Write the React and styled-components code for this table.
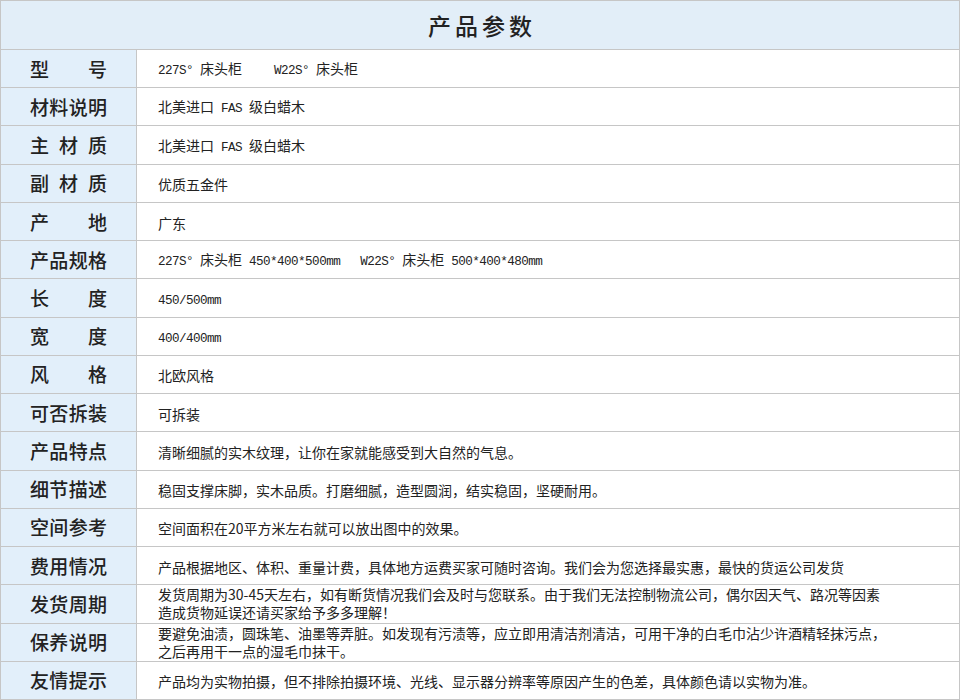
import React from "react";
import styled, { createGlobalStyle } from "styled-components";

const GlobalStyle = createGlobalStyle`
  html, body {
    margin: 0;
    padding: 0;
    background: #fff;
  }
  body {
    font-family: "Noto Sans CJK SC", "Noto Sans", sans-serif;
  }
`;

const Table = styled.div`
  width: 960px;
  height: 700px;
  box-sizing: border-box;
  border-left: 1px solid #c6c6c6;
  border-right: 1px solid #c6c6c6;
  border-top: 1px solid #c6c6c6;
  display: flex;
  flex-direction: column;
  overflow: hidden;
`;

const Header = styled.div`
  height: 48px;
  flex-shrink: 0;
  background: #e2eef8;
  border-bottom: 1px solid #c6c6c6;
  display: flex;
  align-items: center;
  justify-content: center;
  font-size: 23px;
  font-weight: 500;
  letter-spacing: 4px;
  color: #222;
  padding-left: 4px;
`;

const Body = styled.div`
  height: 650px;
  flex-shrink: 0;
  display: flex;
  flex-direction: column;
`;

const Row = styled.div`
  flex: 1;
  display: flex;
  border-bottom: 1px solid #c6c6c6;
  min-height: 0;
`;

const Label = styled.div`
  width: 135px;
  flex-shrink: 0;
  background: #e2effa;
  border-right: 1px solid #c6c6c6;
  display: flex;
  align-items: center;
  justify-content: center;
`;

const LabelText = styled.span`
  display: block;
  width: 77px;
  font-size: 19px;
  font-weight: 500;
  color: #222;
  text-align: justify;
  text-align-last: justify;
  text-justify: inter-character;
  line-height: 22px;
  white-space: nowrap;
`;

const Value = styled.div`
  flex: 1;
  display: flex;
  align-items: ${(p) => (p.multi ? "flex-start" : "center")};
  padding-left: 21px;
  padding-top: ${(p) => (p.multi ? "0" : "2px")};
  font-size: 14px;
  line-height: ${(p) => (p.multi ? "18px" : "20px")};
  color: #222;
  white-space: pre;
  overflow: hidden;
`;

const Code = styled.span`
  font-family: "Liberation Mono", "DejaVu Sans Mono", monospace;
  font-size: 12.6px;
  letter-spacing: -0.55px;
`;

const Gap = styled.span`
  display: inline-block;
  width: ${(p) => p.w}px;
`;

const rows = [
  {
    label: "型号",
    value: (
      <>
        <Code>227S° </Code>床头柜<Gap w={32} /><Code>W22S° </Code>床头柜
      </>
    ),
  },
  { label: "材料说明", value: <>北美进口<Code> FAS </Code>级白蜡木</> },
  { label: "主材质", value: <>北美进口<Code> FAS </Code>级白蜡木</> },
  { label: "副材质", value: "优质五金件" },
  { label: "产地", value: "广东" },
  {
    label: "产品规格",
    value: (
      <>
        <Code>227S° </Code>床头柜<Code> 450*400*500mm</Code><Gap w={20} /><Code>W22S° </Code>床头柜<Code> 500*400*480mm</Code>
      </>
    ),
  },
  { label: "长度", value: <Code>450/500mm</Code> },
  { label: "宽度", value: <Code>400/400mm</Code> },
  { label: "风格", value: "北欧风格" },
  { label: "可否拆装", value: "可拆装" },
  {
    label: "产品特点",
    value: "清晰细腻的实木纹理，让你在家就能感受到大自然的气息。",
  },
  {
    label: "细节描述",
    value: "稳固支撑床脚，实木品质。打磨细腻，造型圆润，结实稳固，坚硬耐用。",
  },
  {
    label: "空间参考",
    value: "空间面积在20平方米左右就可以放出图中的效果。",
  },
  {
    label: "费用情况",
    value:
      "产品根据地区、体积、重量计费，具体地方运费买家可随时咨询。我们会为您选择最实惠，最快的货运公司发货",
  },
  {
    label: "发货周期",
    multi: true,
    value: (
      <>
        发货周期为30-45天左右，如有断货情况我们会及时与您联系。由于我们无法控制物流公司，偶尔因天气、路况等因素
        <br />
        造成货物延误还请买家给予多多理解！
      </>
    ),
  },
  {
    label: "保养说明",
    multi: true,
    value: (
      <>
        要避免油渍，圆珠笔、油墨等弄脏。如发现有污渍等，应立即用清洁剂清洁，可用干净的白毛巾沾少许酒精轻抹污点，
        <br />
        之后再用干一点的湿毛巾抹干。
      </>
    ),
  },
  {
    label: "友情提示",
    value:
      "产品均为实物拍摄，但不排除拍摄环境、光线、显示器分辨率等原因产生的色差，具体颜色请以实物为准。",
  },
];

const App = () => (
  <>
    <GlobalStyle />
    <Table>
      <Header>产品参数</Header>
      <Body>
        {rows.map((row) => (
          <Row key={row.label}>
            <Label>
              <LabelText>{row.label}</LabelText>
            </Label>
            <Value multi={row.multi}>
              <span>{row.value}</span>
            </Value>
          </Row>
        ))}
      </Body>
    </Table>
  </>
);

export default App;
